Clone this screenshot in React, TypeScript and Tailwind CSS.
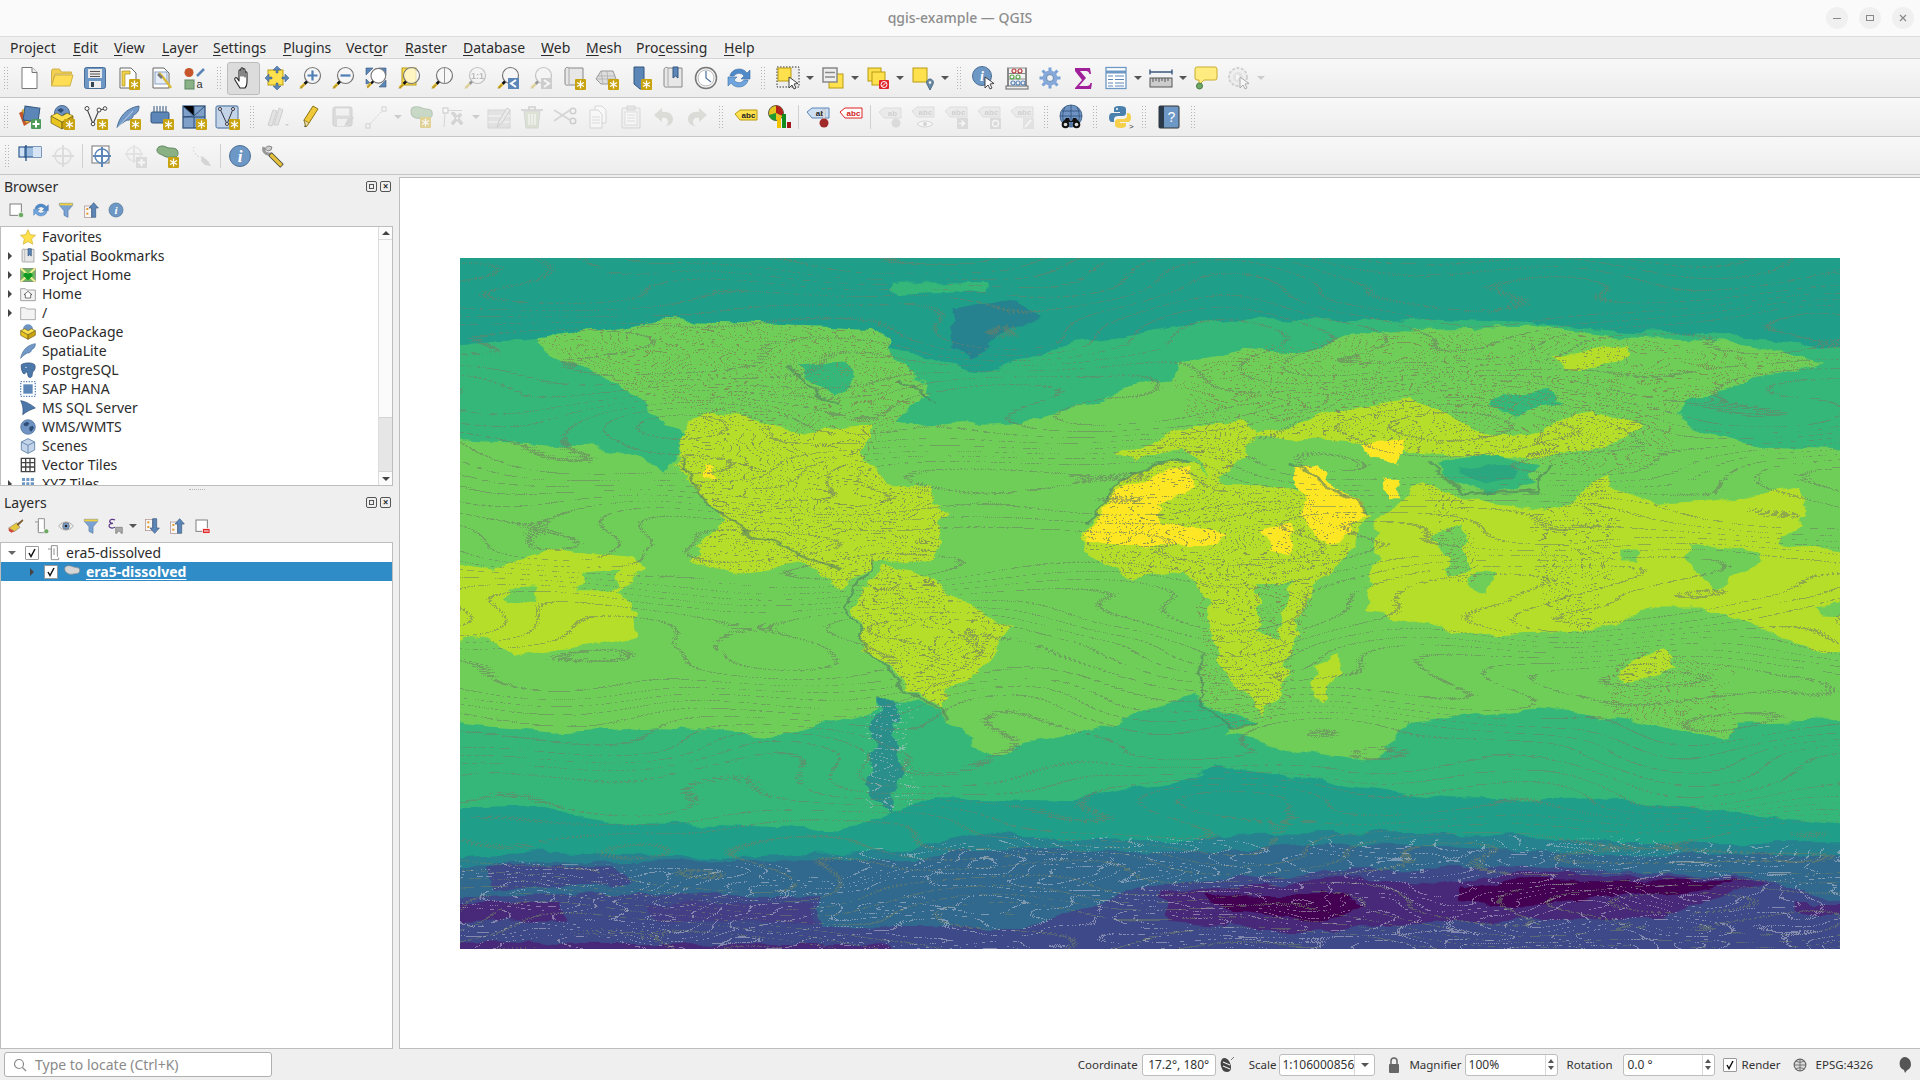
import React from 'react';

type Pt = [number, number];

const font = "[font-family:'Noto_Sans','Liberation_Sans',sans-serif]";

// small shared bits for the toolbar icons
const Badge = ({ x = 13, y = 13 }: { x?: number; y?: number }) => (
  <g transform={`translate(${x} ${y})`}>
    <rect width="11" height="11" rx="1" fill="#c9a30f" />
    <path d="M5.5 1.5v8M2 3.5l7 4M9 3.5l-7 4" stroke="#fff" strokeWidth="1.3" />
  </g>
);

const Lens = ({ children, fill = '#f6f6f6' }: { children?: React.ReactNode; fill?: string }) => (
  <>
    <circle cx="14.5" cy="9.5" r="8" fill={fill} stroke="#777" strokeWidth="1.2" />
    <path d="M9 15.5L6.5 18" stroke="#111" strokeWidth="2.6" />
    <path d="M6.5 18L2.5 22" stroke="#e7bf2c" strokeWidth="3" />
    <path d="M2 22.6L6 18.6" stroke="#333" strokeWidth=".6" />
    {children}
  </>
);

const Tag = ({ t, fill = '#ffe14d', stroke = '#b79a12', color = '#222', y = 3 }: { t: string; fill?: string; stroke?: string; color?: string; y?: number }) => (
  <g transform={`translate(0 ${y})`}>
    <path d="M1 6l5-4h17v10H6z" fill={fill} stroke={stroke} />
    <text x="14.5" y="10" fontSize="8" fontWeight="700" textAnchor="middle" fill={color} fontFamily="Liberation Sans">{t}</text>
  </g>
);

const Globe = () => (
  <>
    <circle cx="12" cy="12" r="11" fill="#6f94c4" stroke="#47698f" />
    <path d="M5 7l5-3 4 2-2 4-5 1zM14 12l5-2 2 3-4 6-3-2z" fill="#2f4f78" />
  </>
);

const Arrow = () => <path d="M13 11l0 11 3-3 2 4 2-1-2-4 4-.5z" fill="#fff" stroke="#333" strokeWidth=".9" />;

const Paper = () => <path d="M4 2h11l5 5v15H4z" fill="#fff" stroke="#666" />;

const Hand = () => (
  <path d="M8 22l-5-8c-1-2 1-3 2-2l2 3V5c0-1.600 2-1.600 2 0v5-7c0-1.600 2-1.600 2 0v7-6c0-1.600 2-1.600 2 0v7-4c0-1.600 2-1.600 2 0v9c0 3-1 5-2 6z" fill="#fff" stroke="#222" strokeWidth="1.100" strokeLinejoin="round" />
);

const icons: Record<string, React.ReactNode> = {
  new: <><path d="M5 1.500h10l5 5v16H5z" fill="#fff" stroke="#777" /><path d="M15 1.500v5h5" fill="#eee" stroke="#777" /></>,
  open: <><path d="M1.500 20V5l1-2h7l2 3h10v2H5z" fill="#f2cf50" stroke="#cdb04a" /><path d="M1.500 20L5 9h18l-3 11z" fill="#ffdd55" stroke="#cdb04a" /></>,
  save: <><rect x="1.500" y="1.500" width="21" height="21" rx="2" fill="#6d97c4" stroke="#4a6f96" /><rect x="5" y="3" width="14" height="9" fill="#e9e9e9" /><path d="M7 5.500h10M7 8h10M7 10.500h10" stroke="#555" /><rect x="6" y="15" width="12" height="7" fill="#eee" /><rect x="8" y="16" width="3" height="5" fill="#345" /></>,
  layout: <><Paper /><path d="M6 5h8v3H9v12H6z" fill="#f3d24b" stroke="#a88f1c" strokeWidth=".7" /><Badge /></>,
  layoutMgr: <><Paper /><rect x="6" y="6" width="12" height="12" fill="#e6edf6" stroke="#87a3c6" /><path d="M10 7l3 3 7 9 2 3" stroke="#d8b93a" strokeWidth="2.500" /><path d="M9 8l4 4" stroke="#777" strokeWidth="2.500" /></>,
  style: <><circle cx="7" cy="6.500" r="4.500" fill="#c6552b" /><path d="M15 10l7-7" stroke="#5b86b7" strokeWidth="2.500" /><rect x="3" y="14" width="9" height="9" fill="#8bb287" stroke="#5d8560" /><text x="17.500" y="22" fontSize="11" fill="#333" textAnchor="middle" fontFamily="Liberation Sans">a</text></>,
  hand: <Hand />,
  panSel: <><rect x="3" y="4" width="15" height="15" fill="#ffe14d" stroke="#b79a12" /><path d="M12 0l4 4h-3v3h-2V4H8zM12 24l-4-4h3v-3h2v3h3zM0 12l4-4v3h3v2H4v3zM24 12l-4 4v-3h-3v-2h3V8z" fill="#5b86b7" stroke="#35577f" strokeWidth=".5" /></>,
  zin: <Lens><path d="M9.500 9.500h10M14.500 4.500v10" stroke="#4f7fb5" strokeWidth="2.200" /></Lens>,
  zout: <Lens><path d="M9.500 9.500h10" stroke="#4f7fb5" strokeWidth="2.200" /></Lens>,
  zfull: <><path d="M2 2h7L2 9zM22 2h-7l7 7zM2 18V13l4 4zM22 21h-7l7-7z" fill="#5b86b7" stroke="#35577f" strokeWidth=".6" /><g transform="translate(1 1) scale(.92)"><Lens fill="#fff" /></g></>,
  zsel: <><rect x="5" y="2" width="14" height="17" fill="#ffe14d" stroke="#b79a12" /><Lens fill="#ffffffaa" /></>,
  zlayer: <><Lens fill="#f7f7f7"><path d="M14.500 1.500v16" stroke="#999" /></Lens></>,
  z11: <Lens><text x="14.500" y="13" fontSize="9" fontWeight="700" fill="#666" textAnchor="middle" fontFamily="Liberation Sans">1:1</text></Lens>,
  zlast: <><Lens /><rect x="12" y="12" width="11" height="11" fill="#5b86b7" /><path d="M20 14l-5 3.500 5 3.500" fill="none" stroke="#fff" strokeWidth="2" /></>,
  znext: <><Lens /><rect x="12" y="12" width="11" height="11" fill="#999" /><path d="M15 14l5 3.500-5 3.500" fill="none" stroke="#fff" strokeWidth="2" /></>,
  mapView: <><path d="M3 4c0-3 3-3 4-2h14v17H7c-2 0-4 1-4-2z" fill="#e7e7e7" stroke="#888" /><path d="M7 2v16" stroke="#aaa" /><Badge /></>,
  map3d: <><path d="M1 13l5-8h12l3 8-5 5H6z" fill="#ddd" stroke="#999" /><path d="M6 5l2 13M12 5l1 13M2 10h18M1 13h20" stroke="#aaa" strokeWidth=".7" /><Badge /></>,
  newBm: <><path d="M6 1h10v22h-4l-6-5z" fill="#5b86b7" stroke="#35577f" /><Badge /></>,
  bookmarks: <><path d="M3 4c0-3 3-3 4-2h14v19H7c-2 0-4 1-4-2z" fill="#e7e7e7" stroke="#888" /><path d="M7 2v18" stroke="#aaa" /><path d="M12 1h5v11l-2.500-2-2.500 2z" fill="#5b86b7" stroke="#35577f" /></>,
  time: <><circle cx="12" cy="12" r="10.500" fill="#f4f4f4" stroke="#777" strokeWidth="1.500" /><circle cx="12" cy="12" r="8" fill="#fff" stroke="#bbb" /><path d="M12 5v7l5 4" fill="none" stroke="#5b7ba3" strokeWidth="1.300" /></>,
  refresh: <><path d="M3 10c1-7 12-10 17-3l3-3v9h-9l3-3c-3-4-8-3-10 0z" fill="#4f8ac9" stroke="#3a6da3" strokeWidth=".6" /><path d="M21 14c-1 7-12 10-17 3l-3 3v-9h9l-3 3c3 4 8 3 10 0z" fill="#6ea5de" stroke="#3a6da3" strokeWidth=".6" /></>,
  select: <><rect x="1" y="1" width="22" height="20" fill="#eee" stroke="#333" strokeDasharray="1.500 1.500" /><rect x="2" y="2" width="13" height="13" fill="#ffe14d" stroke="#b79a12" /><Arrow /></>,
  selAttr: <><rect x="8" y="8" width="14" height="14" fill="#ffe14d" stroke="#b79a12" /><rect x="2" y="2" width="14" height="14" fill="#eee" stroke="#888" strokeWidth="1.500" /><path d="M4 6.500h10M4 11h10" stroke="#888" strokeWidth="1.500" /></>,
  deselect: <><rect x="2" y="2" width="13" height="13" fill="#ffe14d" stroke="#b79a12" /><rect x="6" y="6" width="13" height="13" fill="#ffe14d" stroke="#b79a12" /><rect x="13" y="14" width="10" height="9" rx="1" fill="#e0262a" /><circle cx="18" cy="18.500" r="3" fill="none" stroke="#fff" /><path d="M16 20.500l4-4" stroke="#fff" /></>,
  selLoc: <><rect x="2" y="2" width="14" height="14" fill="#ffe14d" stroke="#b79a12" /><path d="M19 24l-3-6a3.400 3.400 0 1 1 6 0z" fill="#6b8ba5" stroke="#4b6a85" /><circle cx="19" cy="16.500" r="1.200" fill="#fff" /></>,
  identify: <><circle cx="10" cy="10" r="9.500" fill="#6d97c4" stroke="#4a6f96" /><text x="10" y="15" fontSize="14" fontWeight="700" fontStyle="italic" textAnchor="middle" fill="#fff" fontFamily="Liberation Serif">i</text><Arrow /></>,
  abacus: <><path d="M3 2v19M21 2v19" stroke="#666" strokeWidth="1.500" /><path d="M2 2h20M2 7.500h20M2 13h20" stroke="#888" /><rect x="1" y="20" width="22" height="3" fill="#eee" stroke="#666" /><circle cx="9" cy="5" r="2" fill="none" stroke="#b93636" strokeWidth="1.200" /><circle cx="15" cy="5" r="2" fill="none" stroke="#b93636" strokeWidth="1.200" /><circle cx="7" cy="11" r="2" fill="none" stroke="#5ca84f" strokeWidth="1.200" /><circle cx="13" cy="11" r="2" fill="none" stroke="#5ca84f" strokeWidth="1.200" /><circle cx="8" cy="17" r="2" fill="none" stroke="#5b86b7" strokeWidth="1.200" /><circle cx="13" cy="17" r="2" fill="none" stroke="#5b86b7" strokeWidth="1.200" /><circle cx="18" cy="17" r="2" fill="none" stroke="#5b86b7" strokeWidth="1.200" /></>,
  gear: <><path d="M12 1.500v21M1.500 12h21M4.500 4.500l15 15M19.500 4.500l-15 15" stroke="#7ba2d6" strokeWidth="3" /><circle cx="12" cy="12" r="7.500" fill="#86a9d9" /><circle cx="12" cy="12" r="3.500" fill="#f0f0f0" stroke="#5078a8" strokeWidth=".8" /></>,
  sum: <path d="M4 2h15l1 6h-1.500c-.5-2-1.500-3-3.500-3H9l6 7-7 8h8c2 0 3-1 3.500-3H21l-1 6H4v-1l7-8-7-9z" fill="#a0209a" />,
  table: <><rect x="2" y="1.500" width="20" height="21" fill="#fff" stroke="#6d97c4" strokeWidth="1.300" /><path d="M2 6h20" stroke="#6d97c4" strokeWidth="3" /><path d="M4 10h5M11 10h9M4 13.500h5M11 13.500h9M4 17h5M11 17h9M4 20h5M11 20h9" stroke="#5b86b7" /></>,
  measure: <><path d="M1 6h22M1 3.500v5M23 3.500v5" stroke="#35577f" strokeWidth="1.400" /><rect x="1" y="12" width="22" height="9" fill="#ccc" stroke="#555" /><path d="M4 12v4M7 12v3M10 12v4M13 12v3M16 12v4M19 12v3" stroke="#555" /></>,
  tip: <><path d="M3 1h18a2 2 0 0 1 2 2v9a2 2 0 0 1-2 2H10l-5 5v-5H3a2 2 0 0 1-2-2V3a2 2 0 0 1 2-2z" fill="#ffec80" stroke="#c8ad2c" /><circle cx="5.500" cy="20" r="3" fill="#6fa765" stroke="#4a7d46" /></>,
  runGear: <><circle cx="11" cy="11" r="9" fill="#e8e8e8" stroke="#999" strokeWidth="1.800" strokeDasharray="3 1.500" /><circle cx="11" cy="11" r="5" fill="#ccc" /><path d="M9 8l5 3-5 3z" fill="#fff" /><Arrow /></>,

  dsm: <><path d="M2 8l8-4 5 12-8 5z" fill="#c6552b" /><path d="M5 5l9-3 4 13-9 3z" fill="#eec03c" stroke="#a88f1c" strokeWidth=".5" /><rect x="7" y="2" width="15" height="14" fill="#5b86b7" stroke="#35577f" transform="rotate(8 14 9)" /><rect x="14" y="14" width="10" height="10" rx="1" fill="#4e9a5a" /><path d="M19 15.500v7M15.500 19h7" stroke="#fff" strokeWidth="2" /></>,
  gpkg: <><path d="M1 11l11 6v7L1 18z" fill="#e8c420" stroke="#6e5f10" strokeWidth=".7" /><path d="M12 17l11-6v7l-11 6z" fill="#c9a30f" stroke="#6e5f10" strokeWidth=".7" /><circle cx="12" cy="8" r="7.500" fill="#6f94c4" stroke="#47698f" /><path d="M7 5l4-2 3 2-3 3zM13 9l4-1 1 3-4 2z" fill="#2f4f78" /><path d="M1 11l11 6 11-6-6-3-5 3-5-3z" fill="#ffe14d" stroke="#6e5f10" strokeWidth=".7" /><Badge x={14} y={14} /></>,
  shp: <><path d="M4 4l6 15 6-14 5-1" fill="none" stroke="#444" strokeWidth="1.100" /><circle cx="4" cy="3.500" r="2" fill="#fff" stroke="#444" /><circle cx="16" cy="5" r="2" fill="#fff" stroke="#444" /><circle cx="22" cy="3.500" r="1.800" fill="#fff" stroke="#444" /><circle cx="10" cy="19" r="1.800" fill="#fff" stroke="#444" /><Badge x={14} y={14} /></>,
  feather: <><path d="M1 23C3 12 10 3 23 1c0 6-3 8-6 9 1 2-3 6-6 5-3 2-7 4-10 8z" fill="#7198c6" stroke="#4a6f96" /><path d="M1 23L17 6" stroke="#cfe0f2" strokeWidth=".8" /><Badge x={14} y={14} /></>,
  scratch: <><rect x="2" y="7" width="18" height="11" rx="1.500" fill="#5b86b7" stroke="#35577f" /><path d="M5 1v6M8 1v6M11 1v6M14 1v6M17 1v6" stroke="#35577f" /><Badge x={14} y={14} /></>,
  mesh: <><rect x="1" y="1" width="22" height="22" fill="#7fa1c9" stroke="#35577f" strokeWidth="1.300" /><path d="M1 1l11 10V1M12 11l11-10M1 12h22M12 12v11M1 12l11-1" stroke="#2f4f78" /><Badge x={14} y={14} /></>,
  virtual: <><rect x="1" y="1" width="22" height="22" rx="2" fill="#c3d4e8" stroke="#6d8db3" strokeWidth="1.300" /><path d="M5 4l7 15 6-15" fill="none" stroke="#334" /><circle cx="5" cy="4" r="1.500" fill="#fff" stroke="#334" /><circle cx="18" cy="4" r="1.500" fill="#fff" stroke="#334" /><circle cx="12" cy="19" r="1.500" fill="#fff" stroke="#334" /><Badge x={14} y={14} /></>,
  edits: <><path d="M3 20L8 5l4 1-5 15zM9 20l5-17 4 2-5 15z" fill="#ccc" stroke="#999" /><path d="M20 19h4l-2 2z" fill="#999" /></>,
  pencil: <><path d="M8 22l-2-7 9-14 5 3-9 14z" fill="#f0c93a" stroke="#8a7416" /><path d="M6 15l2 7 3-4z" fill="#e6d8b0" stroke="#8a7416" strokeWidth=".7" /><path d="M6 21.500l1.800.7-.9-2z" fill="#333" /></>,
  saveEdits: <><rect x="2" y="2" width="19" height="19" rx="2" fill="#bbb" stroke="#999" /><rect x="5" y="3.500" width="13" height="7" fill="#eee" /><rect x="6" y="14" width="10" height="7" fill="#eee" /><path d="M13 22l2-5 6-6 2 2-6 6z" fill="#aaa" /></>,
  line: <><path d="M4 21L20 4" stroke="#999" strokeDasharray="2 1.500" /><rect x="2" y="19" width="4" height="4" fill="#fff" stroke="#999" /><rect x="18" y="2" width="4" height="4" fill="#fff" stroke="#999" /></>,
  blob: <><path d="M2 6c0-5 7-5 11-3s9 0 10 4-1 6-4 6-8 1-12 0-5-3-5-7z" fill="#8ab184" stroke="#5d8560" strokeWidth="1.100" /><Badge x={11} y={12} /></>,
  vertex: <><rect x="1" y="3" width="5" height="5" fill="#fff" stroke="#888" /><path d="M6 5.500h14M3 8l-1 14" stroke="#aaa" /><path d="M9 8l10 12 2-2-9-11zM9 18l9-10 2 2-9 10z" fill="#aaa" stroke="#888" strokeWidth=".5" /></>,
  attrEdit: <><rect x="1" y="5" width="22" height="18" fill="#ccc" stroke="#aaa" /><path d="M1 11h22M1 17h22" stroke="#fff" /><path d="M10 22l2-6 8-13 3 2-8 13z" fill="#ddd" stroke="#999" /></>,
  trash: <><path d="M1 5h22M9 5V2h6v3" fill="none" stroke="#999" strokeWidth="1.500" /><path d="M4 6h16l-2 17H6z" fill="#bca" stroke="#aaa" /><path d="M9 9v11M12 9v11M15 9v11" stroke="#fff" strokeWidth="1.200" /></>,
  scissors: <><path d="M1 5l16 10M1 16L17 5" stroke="#aaa" strokeWidth="1.800" /><circle cx="20" cy="6" r="2.800" fill="none" stroke="#999" strokeWidth="1.500" /><circle cx="20" cy="16" r="2.800" fill="none" stroke="#999" strokeWidth="1.500" /></>,
  copy: <><path d="M9 1h7l4 4v13H9z" fill="#fff" stroke="#aaa" /><path d="M4 5h8l4 4v14H4z" fill="#fff" stroke="#aaa" /><path d="M6 12h8M6 15h8M6 18h8" stroke="#bbb" /></>,
  paste: <><rect x="3" y="3" width="18" height="20" rx="1" fill="#eee" stroke="#aaa" /><rect x="8" y="1" width="8" height="4" fill="#ccc" stroke="#aaa" /><rect x="6" y="7" width="12" height="13" fill="#fff" stroke="#bbb" /><path d="M8 10h8M8 13h8M8 16h8" stroke="#bbb" /></>,
  undo: <path d="M10 3L2 10l8 7v-4c5-1 6 2 6 4 0 2-1 3-3 4 5 0 8-3 8-7 0-5-5-8-11-7z" fill="#b8b8b0" />,
  redo: <path d="M14 3l8 7-8 7v-4c-5-1-6 2-6 4 0 2 1 3 3 4-5 0-8-3-8-7 0-5 5-8 11-7z" fill="#b8b8b0" />,
  abc: <Tag t="abc" />,
  diagram: <><circle cx="9" cy="8" r="7.500" fill="#e8c420" stroke="#222" strokeWidth=".7" /><path d="M9 8V.5A7.500 7.500 0 0 1 15.500 11z" fill="#b2231f" /><path d="M9 8l-7 2A7.500 7.500 0 0 0 9 15.500z" fill="#1f9a2f" /><rect x="10" y="13" width="4" height="10" fill="#f3c200" /><rect x="15" y="9" width="4" height="14" fill="#118a1e" /><rect x="20" y="17" width="4" height="6" fill="#a01818" /></>,
  abPin: <><Tag t="ab" fill="#cfe0f4" stroke="#5b86b7" y={1} /><path d="M17 4h2v10h-2z" fill="#eee" stroke="#999" strokeWidth=".5" /><circle cx="18" cy="18" r="4.500" fill="#a02a2a" /></>,
  abcRed: <Tag t="abc" fill="#fff" stroke="#e02020" color="#d02020" y={1} />,
  abPinG: <><Tag t="ab" fill="#ddd" stroke="#bbb" color="#999" y={1} /><circle cx="18" cy="18" r="4.500" fill="#bbb" /></>,
  abcEye: <><Tag t="abc" fill="#ddd" stroke="#bbb" color="#999" y={0} /><path d="M6 19c4-4 12-4 16 0-4 4-12 4-16 0z" fill="#fff" stroke="#aaa" /><circle cx="14" cy="19" r="2" fill="#aaa" /></>,
  abcMove: <><Tag t="abc" fill="#ddd" stroke="#bbb" color="#999" y={0} /><rect x="13" y="13" width="11" height="11" fill="#bbb" /><path d="M15 18.500h4M18 15.500l3 3-3 3z" stroke="#fff" fill="#fff" /></>,
  abcRot: <><Tag t="abc" fill="#ddd" stroke="#bbb" color="#999" y={0} /><rect x="13" y="13" width="11" height="11" fill="#bbb" /><circle cx="18.500" cy="18.500" r="3" fill="none" stroke="#fff" strokeWidth="1.300" /></>,
  abcEdit: <><Tag t="abc" fill="#ddd" stroke="#bbb" color="#999" y={0} /><rect x="13" y="13" width="11" height="11" fill="#ccc" /><path d="M15 22l6-7" stroke="#fff" strokeWidth="1.800" /></>,
  geoSearch: <><circle cx="12" cy="11" r="11" fill="#6f94c4" stroke="#47698f" /><path d="M3 6h18M1 11h22M12 0v22M6 2c-3 6-3 12 0 18M18 2c3 6 3 12 0 18" stroke="#2f4f78" strokeWidth=".8" fill="none" /><path d="M4 17l3-4h3l1 3h2l1-3h3l3 4z" fill="#111" /><circle cx="6.500" cy="19.500" r="3.800" fill="#111" /><circle cx="17.500" cy="19.500" r="3.800" fill="#111" /><circle cx="6.500" cy="19.500" r="1.800" fill="#ddd" /><circle cx="17.500" cy="19.500" r="1.800" fill="#ddd" /></>,
  python: <><path d="M12 1c-5 0-6 1-6 3v3h6v1H4c-2 0-3 2-3 4.500S2 17 4 17h2v-3c0-2 2-3 4-3h5c1.500 0 3-1 3-3V4c0-2-2-3-6-3z" fill="#4a80ae" /><path d="M12 23c5 0 6-1 6-3v-2h-6v-1h8c2 0 3-2 3-4.500S22 8 20 8h-1v3c0 2-2 3-4 3h-5c-1.500 0-3 1-3 3v3c0 2 2 3 5 3z" fill="#f6d04b" /><circle cx="9" cy="4" r="1" fill="#fff" /><text x="21" y="24" fontSize="8" fill="#333" fontFamily="Liberation Sans">&gt;</text></>,
  help: <><rect x="2" y="1" width="20" height="22" rx="1" fill="#6d97c4" stroke="#333" /><rect x="2" y="1" width="5" height="22" fill="#2b3a4a" /><text x="14.500" y="17" fontSize="14" fill="#fff" textAnchor="middle" fontFamily="Liberation Sans">?</text></>,

  annot: <><rect x="1" y="3" width="7" height="10" fill="#cfe0f4" stroke="#2f5a8f" strokeWidth="1.200" /><rect x="7" y="3" width="16" height="10" fill="#9dbde0" stroke="#2f5a8f" strokeWidth="1.200" /><path d="M15 3h8v10h-8z" fill="#d7e4f3" /><path d="M8 1v16" stroke="#2f5a8f" strokeWidth="1.400" /></>,
  target: <><circle cx="12" cy="12" r="8" fill="none" stroke="#bbb" strokeWidth="1.500" /><path d="M12 1v22M1 12h22" stroke="#bbb" strokeWidth="2" /></>,
  addTarget: <><rect x="2" y="2" width="17" height="17" fill="#fff" stroke="#777" /><circle cx="12" cy="12" r="7" fill="none" stroke="#5b86b7" strokeWidth="1.400" /><path d="M12 3v20M3 12h18" stroke="#5b86b7" strokeWidth="2" /></>,
  targetAdd: <><circle cx="11" cy="10" r="7" fill="none" stroke="#ccc" strokeWidth="1.500" /><path d="M11 1v18M2 10h18" stroke="#ccc" strokeWidth="2" /><rect x="13" y="13" width="11" height="11" fill="#bbb" /><path d="M18.500 15v7M15 18.500h7" stroke="#fff" strokeWidth="2" /></>,
  blobNew: <><path d="M1 6c0-4 6-5 9-3s9 0 11 3 1 7-2 7-8 1-11-1-7-2-7-6z" fill="#8ab184" stroke="#5d8560" /><Badge x={12} y={13} /></>,
  routeG: <><path d="M5 3l-1 3 4 6 4 1 3 3" fill="none" stroke="#999" strokeDasharray="1.500 2" /><path d="M13 12l6 5 3 5-6-1-4-4z" fill="#aaa" /></>,
  info: <><circle cx="12" cy="12" r="10.500" fill="#6d97c4" stroke="#4a6f96" /><text x="12" y="18" fontSize="17" fontWeight="700" fontStyle="italic" textAnchor="middle" fill="#fff" fontFamily="Liberation Serif">i</text></>,
  wrench: <><path d="M3 3a5 5 0 0 0 5 7l2 0 1 1" fill="none" stroke="#999" strokeWidth="3" /><path d="M8 2c-3 0-4 3-4 3l3 2 3-1 1-3z" fill="#ccc" stroke="#666" strokeWidth=".7" /><path d="M9 10l12 12" stroke="#3a3a3a" strokeWidth="5" /><path d="M9.500 10.500l11 11" stroke="#e4c13c" strokeWidth="3.600" /></>,
};

type Item = string | { g: true } | { d: true } | { s: true };
const G = { g: true as const };
const D = { d: true as const };
const S = { s: true as const };

// names ending in ~ are greyed out (disabled actions)
const row1: Item[] = [G, 'new', 'open', 'save', 'layout', 'layoutMgr', 'style', G, 'hand', 'panSel', 'zin', 'zout', 'zfull', 'zsel', 'zlayer', 'z11~', 'zlast', 'znext~', 'mapView', 'map3d', 'newBm', 'bookmarks', 'time', 'refresh', G, 'select', D, 'selAttr', D, 'deselect', D, 'selLoc', D, G, 'identify', 'abacus', 'gear', 'sum', 'table', D, 'measure', D, 'tip', 'runGear~', D];
const row2: Item[] = [G, 'dsm', 'gpkg', 'shp', 'feather', 'scratch', 'mesh', 'virtual', G, 'edits~', 'pencil', 'saveEdits~', 'line~', D, 'blob~', 'vertex~', D, 'attrEdit~', 'trash~', 'scissors~', 'copy~', 'paste~', 'undo~', 'redo~', G, 'abc', 'diagram', S, 'abPin', 'abcRed', S, 'abPinG~', 'abcEye~', 'abcMove~', 'abcRot~', 'abcEdit~', G, 'geoSearch', G, 'python', G, 'help', G];
const row3: Item[] = [G, 'annot', 'target~', S, 'addTarget', 'targetAdd~', 'blobNew', 'routeG~', S, 'info', 'wrench'];

const Grip = () => (
  <div className="grid grid-cols-2 gap-x-[2px] gap-y-[2px]">
    {Array.from({ length: 16 }).map((_, i) => (
      <span key={i} className="size-[1px] bg-[#b4b4b4]" />
    ))}
  </div>
);

const Caret = ({ cls = 'border-t-[#555]' }: { cls?: string }) => (
  <span className={`w-0 h-0 border-x-[4px] border-x-transparent border-t-[4px] ${cls}`} />
);

const Svg = ({ name, size = 24 }: { name: string; size?: number }) => (
  <svg width={size} height={size} viewBox="0 0 24 24" className="block overflow-visible">
    {icons[name]}
  </svg>
);

const gripWidth = (i: number, last?: boolean) => {
  if (i === 0) return last ? 'w-[13px]' : 'w-[12px]';
  return i === 7 || i === 8 ? 'w-[17px]' : 'w-[16px]';
};

const Toolbar = ({ items, last }: { items: Item[]; last?: boolean }) => (
  <div className={`flex items-center ${last ? 'h-[38px]' : 'h-[39px]'} border-b border-[#c6c6c6] bg-gradient-to-b from-[#f8f8f8] to-[#ededed]`}>
    {items.map((it, i) => {
      if (typeof it !== 'string') {
        if ('g' in it) {
          return (
            <div key={i} className={`flex justify-center ${gripWidth(i, last)}`}>
              <Grip />
            </div>
          );
        }
        if ('d' in it) {
          return (
            <div key={i} className="flex justify-center w-[12px]">
              <Caret cls={String(items[i - 1]).endsWith('~') ? 'border-t-[#ccc]' : 'border-t-[#555]'} />
            </div>
          );
        }
        return (
          <div key={i} className="flex justify-center w-[6px]">
            <span className="w-px h-[24px] bg-[#d0d0d0]" />
          </div>
        );
      }
      const off = it.endsWith('~');
      const name = it.replace('~', '');
      const active = name === 'hand';
      return (
        <div key={i} className={`flex items-center justify-center w-[33px] h-[33px] ${active ? 'bg-[#dcdcdc] border border-[#bdbdbd] rounded-[3px]' : ''} ${off ? 'opacity-40' : ''}`}>
          <Svg name={name} />
        </div>
      );
    })}
  </div>
);

const menus: [string, string, string, number][] = [
  ['Pro', 'j', 'ect', 48], ['', 'E', 'dit', 26], ['', 'V', 'iew', 33], ['', 'L', 'ayer', 36], ['', 'S', 'ettings', 55], ['', 'P', 'lugins', 48], ['Vect', 'o', 'r', 44], ['', 'R', 'aster', 43], ['', 'D', 'atabase', 63], ['', 'W', 'eb', 30], ['', 'M', 'esh', 35], ['Pro', 'c', 'essing', 73], ['', 'H', 'elp', 32],
];

// tree icons drawn in 24 units and shown at 16px
const treeIcons: Record<string, React.ReactNode> = {
  star: <path d="M12 1l3.400 7.500 8 .9-6 5.400 1.700 8L12 18.800 4.900 22.800l1.700-8-6-5.400 8-.9z" fill="#ffe14d" stroke="#c8ad2c" />,
  bm: icons.bookmarks,
  home: <><rect x="1" y="2" width="22" height="20" fill="#6fb65e" stroke="#777" /><path d="M1 2l22 20M23 2L1 22" stroke="#f5ec96" strokeWidth="3" /><path d="M12 20l-7-7a4 4 0 0 1 7-3 4 4 0 0 1 7 3z" fill="#0d9a22" /></>,
  house: <><path d="M1 4h7l2 2h13v16H1z" fill="#f3f3f3" stroke="#777" /><path d="M12 8l6 5h-2v5H8v-5H6z" fill="#fff" stroke="#333" /></>,
  folder: <path d="M1 4h7l2 2h13v16H1z" fill="#f3f3f3" stroke="#888" />,
  gpkg: <><path d="M1 10l11 6v7L1 17z" fill="#e8c420" stroke="#6e5f10" /><path d="M12 16l11-6v7l-11 6z" fill="#c9a30f" stroke="#6e5f10" /><circle cx="12" cy="8" r="7.500" fill="#6f94c4" /><path d="M1 10l11 6 11-6-6-3-5 3-5-3z" fill="#ffe14d" stroke="#6e5f10" /></>,
  feather: <><path d="M1 23C3 12 10 3 23 1c0 6-3 8-6 9 1 2-3 6-6 5-3 2-7 4-10 8z" fill="#7198c6" stroke="#4a6f96" /></>,
  pg: <><path d="M2 4c3-3 17-4 20 0 2 4 0 9-3 11l-1 6c-1 3-5 3-6 0l-1-6c-3 0-3 3-5 3-3-2-5-10-4-14z" fill="#4c78a9" stroke="#2f4f78" /><circle cx="9" cy="8" r="1" fill="#fff" /></>,
  sap: <><rect x="1" y="1" width="22" height="22" fill="none" stroke="#5b86b7" strokeDasharray="2 2" strokeWidth="2" /><rect x="5" y="5" width="14" height="14" fill="#5b86b7" /></>,
  ms: <path d="M1 1c8 1 16 6 22 11-6 2-13 5-19 10 1-6 1-13-3-21z" fill="#4c78a9" stroke="#2f4f78" />,
  wms: <Globe />,
  cube: <><path d="M12 1l10 5v12l-10 5-10-5V6z" fill="#c3d4e8" stroke="#6d8db3" strokeWidth="1.500" /><path d="M2 6l10 5 10-5M12 11v12" fill="none" stroke="#6d8db3" strokeWidth="1.500" /></>,
  grid: <path d="M2 2h20v20H2zM2 8.500h20M2 15h20M8.500 2v20M15 2v20" fill="#fff" stroke="#444" strokeWidth="2" />,
  gridB: <path d="M2 2h20v20H2zM2 8.500h20M2 15h20M8.500 2v20M15 2v20" fill="#6d97c4" stroke="#fff" strokeWidth="2" />,
};

const browserRows: [string, string, boolean][] = [
  ['Favorites', 'star', false], ['Spatial Bookmarks', 'bm', true], ['Project Home', 'home', true], ['Home', 'house', true], ['/', 'folder', true], ['GeoPackage', 'gpkg', false], ['SpatiaLite', 'feather', false], ['PostgreSQL', 'pg', false], ['SAP HANA', 'sap', false], ['MS SQL Server', 'ms', false], ['WMS/WMTS', 'wms', false], ['Scenes', 'cube', false], ['Vector Tiles', 'grid', false], ['XYZ Tiles', 'gridB', true],
];

const panelIcons: Record<string, React.ReactNode> = {
  addGroup: <><rect x="3" y="3" width="17" height="17" fill="#fff" stroke="#777" strokeWidth="1.400" /><circle cx="19.500" cy="19.500" r="4" fill="#6fa765" stroke="#fff" /></>,
  refresh: icons.refresh,
  info: icons.info,
  filter: <><path d="M2 2h20v3l-7 8v10l-6-3v-7L2 5z" fill="#7ba2d2" stroke="#5078a8" /><path d="M2 2h20v3H2z" fill="#f0d040" /></>,
  collapse: <><rect x="2" y="6" width="11" height="17" fill="#f6f6f6" stroke="#a88" /><rect x="5" y="9" width="3" height="3" fill="#e39a2a" /><rect x="5" y="16" width="3" height="3" fill="#e39a2a" /><path d="M16 1l7 8h-4v14h-6V9H9z" fill="#5b86b7" stroke="#35577f" /></>,
  expand: <><rect x="2" y="2" width="11" height="17" fill="#f6f6f6" stroke="#a88" /><rect x="5" y="5" width="3" height="3" fill="#e39a2a" /><rect x="5" y="12" width="3" height="3" fill="#e39a2a" /><path d="M16 23l7-8h-4V1h-6v14H9z" fill="#5b86b7" stroke="#35577f" /></>,
  style: <><path d="M1 15l12-8 5 7-8 6z" fill="#e6c63c" stroke="#888" /><path d="M1 15l9 5-5 2-4-3z" fill="#d04a3a" /><path d="M13 9l9-7 1 2-8 8z" fill="#7a5a30" /></>,
  addLayer: <><path d="M8 1h9v18H8z" fill="#fff" stroke="#888" strokeWidth="1.400" /><path d="M3 6h5v16h11v-3" fill="#fff" stroke="#888" strokeWidth="1.400" /><path d="M12 5v10" stroke="#888" strokeWidth="1.400" /></>,
  addLayerG: <><path d="M8 1h9v18H8z" fill="#fff" stroke="#888" strokeWidth="1.400" /><path d="M3 6h5v16h11v-3" fill="#fff" stroke="#888" strokeWidth="1.400" /><circle cx="20" cy="20" r="3.800" fill="#6fa765" stroke="#fff" /></>,
  eye: <><path d="M1 12c6-8 16-8 22 0-6 8-16 8-22 0z" fill="#eee" stroke="#999" strokeWidth="1.200" /><circle cx="12" cy="12" r="5" fill="#7ba2d2" stroke="#555" /><circle cx="12" cy="12" r="2" fill="#222" /></>,
  eps: <><path d="M12 3c-3-2-8-1-8 2s3 3 5 3c-3 0-6 1-6 4s5 4 9 2" fill="none" stroke="#5a3a86" strokeWidth="1.800" /><path d="M13 14h10v9h-2l-1-3h-4l-1 3h-2z" fill="#aaa" stroke="#777" /></>,
  remove: <><rect x="3" y="3" width="17" height="17" fill="#fff" stroke="#777" strokeWidth="1.400" /><rect x="13" y="16" width="11" height="7" fill="#e02828" stroke="#fff" /><path d="M15 19.500h7" stroke="#fff" strokeWidth="1.500" /></>,
};

const PanelSvg = ({ set, name, size = 16 }: { set: Record<string, React.ReactNode>; name: string; size?: number }) => (
  <svg width={size} height={size} viewBox="0 0 24 24" className="block shrink-0 overflow-visible">
    {set[name]}
  </svg>
);

const DockTitle = ({ title }: { title: string }) => (
  <div className="flex items-center h-[18px] pl-1">
    <span className="text-[14px] text-[#2b2b2b] flex-1">{title}</span>
    <span className="flex items-center justify-center size-[11px] border border-[#555] rounded-[2px] mr-[3px]">
      <span className="size-[5px] border border-[#555]" />
    </span>
    <span className="flex items-center justify-center size-[11px] border border-[#555] rounded-[2px] mr-[2px] text-[10px] leading-none font-bold text-[#333]">×</span>
  </div>
);

const Check = () => (
  <span className="flex items-center justify-center size-[14px] bg-white border border-[#9a9a9a] rounded-[1px] shrink-0">
    <svg width="10" height="10" viewBox="0 0 10 10"><path d="M2 5l2 3.500L8 1" fill="none" stroke="#111" strokeWidth="1.500" /></svg>
  </span>
);

const TriRight = () => <span className="w-0 h-0 border-y-[4px] border-y-transparent border-l-[4px] border-l-[#444]" />;

// ---- map: coordinates are read off the reference and scaled by the viewBox ----
const green: Pt[] = [[-40, 430], [100, 440], [200, 460], [250, 500], [270, 420], [200, 320], [125, 250], [105, 215], [250, 175], [340, 178], [480, 190], [505, 260], [545, 340], [505, 395], [570, 400], [640, 395], [730, 350], [770, 305], [810, 300], [815, 270], [880, 235], [960, 245], [1000, 205], [1080, 190], [1200, 185], [1300, 212], [1400, 218], [1535, 262], [1450, 300], [1370, 350], [1375, 410], [1460, 450], [1590, 460], [1590, 1040], [1430, 1048], [1420, 1080], [1380, 1070], [1300, 1040], [1200, 1020], [1070, 1050], [1030, 1130], [950, 1110], [870, 1075], [900, 1050], [840, 1000], [830, 985], [740, 1050], [600, 1115], [570, 1060], [530, 1000], [480, 1000], [470, 1030], [360, 1080], [250, 1060], [120, 1072], [-40, 1040]];
const sea: Pt[] = [[-40, 230], [100, 215], [200, 190], [400, 195], [510, 235], [590, 290], [700, 225], [800, 190], [900, 168], [1000, 178], [1100, 170], [1200, 180], [1300, 200], [1400, 205], [1590, 240], [1590, 1275], [1400, 1240], [1280, 1210], [1130, 1215], [1000, 1190], [860, 1140], [830, 1170], [680, 1215], [540, 1210], [480, 1260], [440, 1280], [300, 1270], [180, 1265], [100, 1230], [-40, 1240]];

const lime: Pt[][] = [
  [[300, 365], [400, 420], [470, 400], [470, 480], [500, 530], [540, 530], [555, 600], [545, 690], [480, 695], [445, 760], [400, 700], [320, 720], [275, 690], [310, 610], [290, 560], [260, 480], [265, 420]],
  [[490, 700], [540, 730], [590, 800], [632, 840], [610, 900], [585, 950], [545, 1010], [510, 950], [470, 890], [455, 810], [470, 750]],
  [[-40, 690], [60, 720], [120, 670], [210, 690], [225, 720], [190, 770], [215, 800], [220, 860], [170, 880], [80, 905], [50, 860], [-40, 900]],
  [[710, 680], [720, 600], [760, 510], [830, 480], [870, 530], [940, 530], [970, 590], [1030, 590], [1010, 660], [950, 800], [930, 960], [910, 1030], [880, 960], [850, 900], [850, 780], [820, 720], [760, 735]],
  [[745, 470], [780, 445], [830, 400], [890, 385], [900, 420], [1000, 370], [1075, 340], [1125, 400], [1180, 430], [1275, 370], [1330, 400], [1290, 450], [1200, 470], [1120, 470], [1040, 445], [900, 430], [860, 520], [820, 450], [770, 485]],
  [[1025, 810], [1040, 600], [1090, 530], [1130, 560], [1220, 590], [1290, 510], [1300, 540], [1350, 580], [1410, 570], [1500, 535], [1510, 600], [1480, 660], [1590, 690], [1590, 905], [1500, 880], [1400, 800], [1340, 800], [1300, 830], [1250, 855], [1160, 860]],
  [[1298, 960], [1320, 910], [1350, 890], [1365, 930], [1330, 955]],
  [[1230, 250], [1310, 228], [1300, 270], [1260, 280]],
  [[965, 925], [990, 900], [985, 1000], [965, 990]],
];
const limeHoles: Pt[][] = [
  [[72, 752], [105, 750], [105, 790], [75, 785]],
  [[150, 722], [198, 715], [190, 760], [152, 760]],
  [[1300, 675], [1325, 670], [1320, 700], [1302, 700]],
  [[1380, 660], [1460, 680], [1400, 760], [1380, 720]],
  [[1140, 720], [1160, 720], [1155, 770], [1142, 765]],
  [[1100, 640], [1130, 620], [1130, 720], [1110, 725]],
  [[1520, 790], [1590, 780], [1590, 820], [1530, 815]],
  [[905, 740], [935, 740], [925, 860], [905, 850]],
  [[950, 830], [960, 830], [950, 920], [940, 920]],
];
const sun: Pt[][] = [
  [[715, 655], [722, 610], [750, 540], [825, 490], [830, 530], [800, 580], [800, 630], [830, 618], [870, 640], [860, 662], [740, 662]],
  [[905, 632], [935, 615], [940, 680], [915, 670]],
  [[945, 490], [965, 480], [985, 530], [1025, 590], [1000, 640], [975, 665], [950, 590]],
  [[1015, 445], [1070, 432], [1060, 480], [1030, 470]],
  [[1040, 520], [1060, 520], [1060, 560], [1042, 560]],
  [[288, 488], [300, 490], [308, 522], [295, 518]],
];

const poly = (p: Pt[]) => p.map(([x, y]) => `${x},${y}`).join(' ');

// discrete lookup: one "on" level every `every` levels gives contour lines out of a height field
const bands = (every: number, on = 1) =>
  Array.from({ length: 256 }, (_, i) => (i % every < on ? 1 : 0)).join(' ');

const Iso = ({ id, freq, seed, table, color, opacity, k2, k3, k4, octaves = 2 }: { id: string; freq: string; seed: number; table: string; color: string; opacity: number; k2: number; k3: number; k4: number; octaves?: number }) => (
  <filter id={id} filterUnits="userSpaceOnUse" x="-50" y="-50" width="1700" height="1700" colorInterpolationFilters="sRGB">
    <feTurbulence type="fractalNoise" baseFrequency={freq} numOctaves={octaves} seed={seed} />
    <feColorMatrix values="1 0 0 0 0 0 1 0 0 0 0 0 1 0 0 0 0 0 0 1" result="n" />
    <feComposite in="SourceGraphic" in2="n" operator="arithmetic" k1="0" k2={k2} k3={k3} k4={k4} />
    <feColorMatrix values="0 0 0 0 0 0 0 0 0 0 0 0 0 0 0 1 0 0 0 0" />
    <feComponentTransfer result="lines">
      <feFuncA type="discrete" tableValues={table} />
    </feComponentTransfer>
    <feFlood floodColor={color} floodOpacity={opacity} />
    <feComposite in2="lines" operator="in" />
  </filter>
);

const WorldMap = () => (
  <svg viewBox="22 38 1523 1502" preserveAspectRatio="none" className="block w-[1380px] h-[691px]">
    <defs>
      <filter id="rough" filterUnits="userSpaceOnUse" x="-100" y="-100" width="1800" height="1800" colorInterpolationFilters="sRGB">
        <feTurbulence type="fractalNoise" baseFrequency="0.022" numOctaves="4" seed="7" />
        <feDisplacementMap in="SourceGraphic" scale="30" xChannelSelector="R" yChannelSelector="G" />
      </filter>
      <linearGradient id="saw" gradientUnits="userSpaceOnUse" x1="0" y1="0" x2="0" y2="260" spreadMethod="repeat">
        <stop offset="0" stopColor="#000" />
        <stop offset="1" stopColor="#fff" />
      </linearGradient>
      <Iso id="isoSea" freq="0.004 0.009" seed={4} table={bands(16)} color="#6f7f66" opacity={0.55} k2={0.5} k3={0.7} k4={-0.1} octaves={1} />
      <Iso id="isoLand" freq="0.008 0.017" seed={9} table={bands(11)} color="#7d8a58" opacity={0.8} k2={0} k3={1} k4={0} />
      <Iso id="isoSouth" freq="0.006 0.016" seed={13} table={bands(16)} color="#c9c9d6" opacity={0.5} k2={0.5} k3={0.7} k4={-0.1} />
      <mask id="landMask" maskUnits="userSpaceOnUse" x="-50" y="-50" width="1700" height="1700">
        <g filter="url(#rough)" fill="#fff">
          {lime.slice(0, 2).map((p, i) => <polygon key={i} points={poly(p)} />)}
          {lime.slice(3, 5).map((p, i) => <polygon key={i} points={poly(p)} />)}
          <polygon points={poly([[105, 215], [250, 175], [480, 190], [545, 340], [505, 395], [470, 480], [300, 380], [200, 320]])} />
          <polygon points={poly([[810, 300], [880, 235], [1080, 190], [1300, 212], [1535, 262], [1450, 300], [1370, 350], [1350, 480], [1290, 510], [1180, 480], [1000, 380], [830, 400]])} />
          <polygon points={poly([[1090, 530], [1130, 560], [1150, 740], [1110, 740]])} />
          <polygon points={poly([[1200, 600], [1290, 510], [1300, 660], [1270, 860], [1220, 800]])} />
          <polygon points={poly([[1280, 960], [1320, 890], [1420, 920], [1430, 1080], [1300, 1040]])} />
          <polygon points={poly([[840, 720], [960, 780], [930, 1030], [880, 1070], [835, 980]])} />
        </g>
      </mask>
      <mask id="southMask" maskUnits="userSpaceOnUse" x="-50" y="-50" width="1700" height="1700">
        <g filter="url(#rough)" fill="#fff">
          <polygon points={poly([[-40, 1350], [300, 1360], [500, 1320], [640, 1300], [900, 1300], [1300, 1300], [1590, 1330], [1590, 1600], [-40, 1600]])} />
          <polygon points={poly([[470, 1000], [520, 1000], [520, 1240], [470, 1240]])} />
        </g>
      </mask>
    </defs>
    <rect x="-50" y="-50" width="1700" height="1700" fill="#1f9e89" />
    <g filter="url(#rough)">
      <polygon points={poly(sea)} fill="#35b779" />
      <polygon points={poly([[380, 100], [610, 90], [690, 150], [640, 210], [590, 285], [548, 225], [555, 150], [490, 130]])} fill="#1f9e89" />
      <polygon points={poly([[565, 150], [630, 128], [665, 160], [620, 205], [590, 262], [562, 215]])} fill="#26828e" />
      <polygon points={poly([[500, 92], [605, 90], [600, 110], [510, 118]])} fill="#35b779" />
      <polygon points={poly(green)} fill="#6ece58" />
      <polygon points={poly([[395, 270], [445, 260], [460, 300], [440, 340], [405, 300]])} fill="#35b779" />
      <polygon points={poly([[1175, 330], [1225, 320], [1235, 350], [1185, 385], [1160, 360]])} fill="#35b779" />
      {lime.map((p, i) => <polygon key={i} points={poly(p)} fill="#b5de2b" />)}
      {limeHoles.map((p, i) => <polygon key={i} points={poly(p)} fill="#6ece58" />)}
      {sun.map((p, i) => <polygon key={i} points={poly(p)} fill="#fde725" />)}
      <polygon points={poly([[1100, 485], [1160, 468], [1210, 488], [1212, 525], [1160, 550], [1118, 525]])} fill="#35b779" />
      <polygon points={poly([[1125, 498], [1170, 485], [1195, 500], [1190, 520], [1150, 530]])} fill="#2ba77f" />
      <polygon points={poly([[480, 1000], [500, 1000], [508, 1130], [498, 1250], [470, 1190]])} fill="#2a8f8a" />
      <polygon points={poly([[-40, 1345], [100, 1330], [300, 1340], [500, 1325], [600, 1290], [800, 1310], [900, 1290], [1100, 1285], [1300, 1310], [1590, 1310], [1590, 1600], [-40, 1600]])} fill="#26828e" />
      <polygon points={poly([[-40, 1360], [300, 1345], [530, 1340], [640, 1320], [800, 1330], [1000, 1310], [1250, 1330], [1590, 1340], [1590, 1600], [-40, 1600]])} fill="#31688e" />
      <polygon points={poly([[-40, 1430], [210, 1420], [415, 1430], [420, 1490], [650, 1495], [780, 1400], [1000, 1370], [1200, 1360], [1480, 1390], [1510, 1420], [1590, 1440], [1590, 1600], [-40, 1600]])} fill="#3e4989" />
      <polygon points={poly([[50, 1360], [200, 1360], [210, 1400], [60, 1410]])} fill="#3e4989" />
      <polygon points={poly([[-40, 1440], [130, 1440], [140, 1480], [-40, 1480]])} fill="#482878" />
      <polygon points={poly([[225, 1440], [410, 1445], [410, 1480], [240, 1480]])} fill="#433e85" />
      <polygon points={poly([[795, 1420], [1000, 1385], [1110, 1400], [1200, 1370], [1470, 1395], [1350, 1470], [1100, 1480], [950, 1505], [800, 1480]])} fill="#482878" />
      <polygon points={poly([[1490, 1440], [1590, 1440], [1590, 1465], [1495, 1462]])} fill="#482878" />
      <polygon points={poly([[845, 1425], [1000, 1420], [1015, 1450], [975, 1480], [880, 1460]])} fill="#440154" />
      <polygon points={poly([[1120, 1410], [1200, 1385], [1440, 1395], [1350, 1420], [1200, 1450], [1125, 1440]])} fill="#440154" />
      <polygon points={poly([[-40, 1525], [500, 1530], [500, 1600], [-40, 1600]])} fill="#482878" />
    </g>
    {/* contour lines: banded noise over a repeating ramp, so they run roughly east-west */}
    <rect x="-50" y="-50" width="1700" height="1700" fill="url(#saw)" filter="url(#isoSea)" />
    <g mask="url(#landMask)">
      <rect x="-50" y="-50" width="1700" height="1700" fill="#fff" filter="url(#isoLand)" />
    </g>
    <g mask="url(#southMask)">
      <rect x="-50" y="-50" width="1700" height="1700" fill="url(#saw)" filter="url(#isoSouth)" />
    </g>
    {/* steep ground: contours bunch up to a dark smear */}
    <g filter="url(#rough)" fill="none" stroke="#527d62" strokeWidth="2.500" opacity=".6">
      <path d="M262 470L300 590L370 660L440 720" vectorEffect="non-scaling-stroke" />
      <path d="M480 690L445 800L480 910L540 1010L560 1040" vectorEffect="non-scaling-stroke" />
      <path d="M1090 480L1130 550L1210 545L1225 490" vectorEffect="non-scaling-stroke" />
      <path d="M385 270L420 340L450 360M510 300L545 350" vectorEffect="non-scaling-stroke" />
      <path d="M835 900L840 1000L880 1070L900 1050" vectorEffect="non-scaling-stroke" />
      <path d="M710 620L760 510L825 480M940 480L1025 590" vectorEffect="non-scaling-stroke" />
    </g>
  </svg>
);

const Field = ({ w, children, cls = '' }: { w: number; children: React.ReactNode; cls?: string }) => (
  <div className={`flex items-center h-[22px] bg-white border border-[#bdbdbd] rounded-[3px] text-[12px] text-[#333] shrink-0 ${cls}`} style={{ width: w }}>
    {children}
  </div>
);

const Spin = () => (
  <div className="ml-auto flex flex-col items-center justify-center gap-[3px] w-[12px] h-full border-l border-[#d8d8d8]">
    <span className="w-0 h-0 border-x-[3px] border-x-transparent border-b-[4px] border-b-[#555]" />
    <span className="w-0 h-0 border-x-[3px] border-x-transparent border-t-[4px] border-t-[#555]" />
  </div>
);

export default function App() {
  return (
    <div className={`flex flex-col w-[1920px] h-[1080px] overflow-hidden bg-[#efefef] text-[#2b2b2b] ${font}`}>
      {/* title bar */}
      <div className="relative flex items-center justify-center h-[37px] pb-[2px] bg-[#fafafa] border-b border-[#dedede] shrink-0">
        <span className="text-[14px] font-medium text-[#8d8d8d]">qgis-example — QGIS</span>
        <div className="absolute right-[6px] top-[7px] flex gap-[11px]">
          {['min', 'max', 'close'].map((k) => (
            <span key={k} className="flex items-center justify-center size-[22px] rounded-full bg-[#f0f0f0]">
              {k === 'min' && <span className="w-[8px] h-[1px] bg-[#888]" />}
              {k === 'max' && <span className="w-[8px] h-[6px] border border-[#888]" />}
              {k === 'close' && <svg width="8" height="8" viewBox="0 0 8 8"><path d="M1 1l6 6M7 1L1 7" stroke="#888" strokeWidth="1.200" /></svg>}
            </span>
          ))}
        </div>
      </div>

      {/* menu */}
      <div className="flex items-center h-[22px] pl-[10px] gap-[15px] bg-[#efefef] border-b border-[#d4d4d4] text-[14px] shrink-0">
        {menus.map(([a, b, c, w]) => (
          <span key={a + b + c} style={{ width: w }} className="whitespace-nowrap shrink-0">
            {a}<span className="underline decoration-[1px] underline-offset-2">{b}</span>{c}
          </span>
        ))}
      </div>

      <Toolbar items={row1} />
      <Toolbar items={row2} />
      <Toolbar items={row3} last />

      <div className="flex flex-1 min-h-0 pt-[2px]">
        {/* left docks */}
        <div className="flex flex-col w-[393px] shrink-0">
          <DockTitle title="Browser" />
          <div className="flex items-center h-[31px] pl-[3px] pb-[2px]">
            {['addGroup', 'refresh', 'filter', 'collapse', 'info'].map((n) => (
              <div key={n} className="flex justify-center w-[25px]">
                <PanelSvg set={panelIcons} name={n} />
              </div>
            ))}
          </div>
          <div className="flex h-[260px] bg-white border border-[#bdbdbd] shrink-0 overflow-hidden">
            <div className="flex-1 min-w-0 text-[14px] overflow-hidden">
              {browserRows.map(([label, ic, arrow]) => (
                <div key={label} className="flex items-center h-[19px] shrink-0">
                  <span className="flex justify-center w-[17px] shrink-0">{arrow && <TriRight />}</span>
                  <span className="w-[20px] flex justify-center"><PanelSvg set={treeIcons} name={ic} /></span>
                  <span className="ml-[4px] whitespace-nowrap">{label}</span>
                </div>
              ))}
            </div>
            <div className="flex flex-col w-[14px] border-l border-[#dcdcdc] bg-[#fbfbfb] shrink-0">
              <div className="flex items-center justify-center h-[13px] border-b border-[#dcdcdc]">
                <span className="w-0 h-0 border-x-[4px] border-x-transparent border-b-[4px] border-b-[#444]" />
              </div>
              <div className="flex-1" />
              <div className="h-[55px] bg-[#e6e6e6] border-y border-[#d4d4d4]" />
              <div className="flex items-center justify-center h-[13px]">
                <span className="w-0 h-0 border-x-[4px] border-x-transparent border-t-[4px] border-t-[#444]" />
              </div>
            </div>
          </div>
          <div className="flex justify-center h-[7px] items-center"><span className="w-[16px] border-t border-dotted border-[#b5b5b5]" /></div>
          <DockTitle title="Layers" />
          <div className="flex items-center h-[31px] pl-[3px] pb-[2px]">
            {[['style', 25], ['addLayerG', 25], ['eye', 26], ['filter', 24], ['eps', 24], ['caret', 12], ['expand', 25], ['collapse', 25], ['remove', 25]].map(([n, w]) => (
              <div key={n as string} className="flex justify-center" style={{ width: w as number }}>
                {n === 'caret' ? <Caret /> : <PanelSvg set={panelIcons} name={n as string} />}
              </div>
            ))}
          </div>
          <div className="flex-1 min-h-0 bg-white border border-[#bdbdbd] text-[14px]">
            <div className="flex items-center h-[19px] pl-[7px]">
              <span className="w-0 h-0 border-x-[4px] border-x-transparent border-t-[4px] border-t-[#666]" />
              <span className="ml-[9px]"><Check /></span>
              <span className="ml-[7px]"><PanelSvg set={panelIcons} name="addLayer" /></span>
              <span className="ml-[4px]">era5-dissolved</span>
            </div>
            <div className="flex items-center h-[19px] pl-[29px] bg-[#308cc6] text-white">
              <TriRight />
              <span className="ml-[10px]"><Check /></span>
              <svg width="17" height="13" viewBox="0 0 24 18" className="ml-[6px]"><path d="M1 5c0-5 7-5 11-3s9 0 10 4-2 6-5 6-8 2-11 0-5-3-5-7z" fill="#d6d6d6" stroke="#888" /></svg>
              <span className="ml-[5px] font-bold underline underline-offset-2">era5-dissolved</span>
            </div>
          </div>
        </div>

        {/* map canvas */}
        <div className="flex-1 min-w-0 ml-[6px] bg-white border-t border-l border-b border-[#bdbdbd] pl-[60px] pt-[80px]">
          <WorldMap />
        </div>
      </div>

      {/* status bar */}
      <div className="flex items-center h-[31px] shrink-0 pl-[4px] text-[11.5px] text-[#333]">
        <div className="flex items-center h-[25px] w-[268px] bg-white border border-[#b0b0b0] rounded-[3px] pl-[8px] text-[14px] text-[#8a8a8a]">
          <svg width="14" height="14" viewBox="0 0 14 14" className="mr-[8px]"><circle cx="6" cy="6" r="4.500" fill="none" stroke="#8a8a8a" strokeWidth="1.200" /><path d="M9.500 9.500L13 13" stroke="#8a8a8a" strokeWidth="1.200" /></svg>
          Type to locate (Ctrl+K)
        </div>
        <span className="ml-auto mr-[4px]">Coordinate</span>
        <Field w={74} cls="justify-center">17.2°, 180°</Field>
        <svg width="16" height="18" viewBox="0 0 16 18" className="ml-[3px] mr-[6px]"><path d="M3 3c2-2 6-1 8 4s1 9-3 9-5-3-6-6 0-5 1-7z" fill="#444" /><path d="M4 6l7 3M4 10l7 3" stroke="#eee" strokeWidth="1.200" /><path d="M12 4l3-3" stroke="#777" /></svg>
        <span className="mr-[3px] ml-[8px]">Scale</span>
        <Field w={96} cls="pl-[2px]">
          1:106000856
          <div className="ml-auto flex items-center justify-center w-[20px] h-full border-l border-[#d8d8d8]"><Caret /></div>
        </Field>
        <svg width="12" height="16" viewBox="0 0 12 16" className="ml-[13px] mr-[9px]"><path d="M3 7V4a3 3 0 0 1 6 0v3" fill="none" stroke="#666" strokeWidth="1.500" /><rect x="1" y="7" width="10" height="9" rx="1" fill="#666" /></svg>
        <span className="mr-[3px]">Magnifier</span>
        <Field w={93} cls="pl-[3px]">100%<Spin /></Field>
        <span className="ml-[9px] mr-[10px]">Rotation</span>
        <Field w={92} cls="pl-[4px]">0.0 °<Spin /></Field>
        <span className="ml-[8px]"><Check /></span>
        <span className="ml-[5px]">Render</span>
        <svg width="14" height="14" viewBox="0 0 24 24" className="ml-[12px] mr-[9px]"><circle cx="12" cy="12" r="10" fill="#ddd" stroke="#666" strokeWidth="2" /><path d="M2 12h20M12 2v20M5 5c4 3 10 3 14 0M5 19c4-3 10-3 14 0" stroke="#666" fill="none" strokeWidth="1.500" /></svg>
        <span>EPSG:4326</span>
        <svg width="16" height="18" viewBox="0 0 16 18" className="ml-[23px] mr-[8px]"><path d="M8 1a7 7 0 0 1 3 13.300L9 17l-1-3A7 7 0 0 1 8 1z" fill="#555" /></svg>
      </div>
    </div>
  );
}
